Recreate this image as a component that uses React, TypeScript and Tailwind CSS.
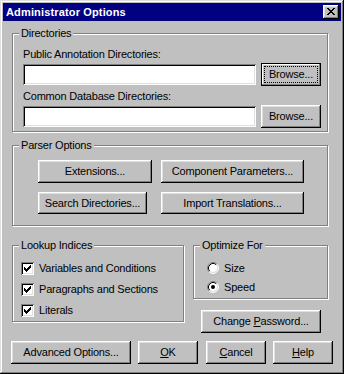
import React from 'react';

const raised =
  'shadow-[inset_-1px_-1px_#000,inset_1px_1px_#fff,inset_-2px_-2px_#808080,inset_2px_2px_#dfdfdf]';
const sunken =
  'shadow-[inset_1px_1px_#808080,inset_-1px_-1px_#fff,inset_2px_2px_#000,inset_-2px_-2px_#dfdfdf]';

function Btn({ children, className = '' }: { children: React.ReactNode; className?: string }) {
  return (
    <button
      className={`flex items-center justify-center whitespace-nowrap bg-[#c0c0c0] leading-[13px] ${raised} ${className}`}
    >
      {children}
    </button>
  );
}

function Group({
  label,
  className = '',
  children,
}: {
  label: string;
  className?: string;
  children: React.ReactNode;
}) {
  return (
    <div
      className={`relative border border-[#808080] shadow-[inset_1px_1px_#fff,1px_1px_#fff] ${className}`}
    >
      <span className="absolute left-[6px] top-[-7px] bg-[#c0c0c0] px-[2px] leading-[13px] whitespace-nowrap">
        {label}
      </span>
      {children}
    </div>
  );
}

function Field() {
  return <input type="text" readOnly className={`w-[233px] h-[21px] bg-white outline-none ${sunken}`} />;
}

function CheckRow({ label }: { label: string }) {
  // 13x13 win95 checkbox, check mark drawn pixel column by column
  const cols = [
    [3, 5],
    [4, 6],
    [5, 7],
    [6, 6],
    [7, 5],
    [8, 4],
    [9, 3],
  ];
  return (
    <div className="flex h-[13px] items-center">
      <span className={`block w-[13px] h-[13px] shrink-0 bg-white ${sunken}`}>
        <svg width="13" height="13" viewBox="0 0 13 13" shapeRendering="crispEdges">
          <path d={cols.map(([x, y]) => `M${x} ${y}h1v3h-1z`).join(' ')} fill="#000" />
        </svg>
      </span>
      <span className="ml-[5px] leading-[13px] whitespace-nowrap">{label}</span>
    </div>
  );
}

function RadioRow({ label, on }: { label: string; on?: boolean }) {
  return (
    <div className="flex h-[12px] items-center">
      <svg width="12" height="12" viewBox="0 0 12 12" className="shrink-0">
        <circle cx="6" cy="6" r="5" fill="#fff" />
        <path d="M2.11 9.89A5.5 5.5 0 0 1 9.89 2.11" stroke="#808080" fill="none" />
        <path d="M9.89 2.11A5.5 5.5 0 0 1 2.11 9.89" stroke="#fff" fill="none" />
        <path d="M2.82 9.18A4.5 4.5 0 0 1 9.18 2.82" stroke="#000" fill="none" />
        <path d="M9.18 2.82A4.5 4.5 0 0 1 2.82 9.18" stroke="#dfdfdf" fill="none" />
        {on && <circle cx="6" cy="6" r="2" fill="#000" />}
      </svg>
      <span className="ml-[5px] leading-[13px]">{label}</span>
    </div>
  );
}

export default function App() {
  return (
    <div
      className="w-[344px] h-[374px] bg-[#c0c0c0] p-[3px] flex flex-col text-black text-[11px] tracking-[-0.2px] shadow-[inset_-1px_-1px_#000,inset_1px_1px_#dfdfdf,inset_-2px_-2px_#808080,inset_2px_2px_#fff]"
      style={{ fontFamily: '"Liberation Sans", Arial, sans-serif' }}
    >
      {/* title bar */}
      <div className="h-[18px] bg-[#000080] flex items-center justify-between pl-[3px] pr-[2px]">
        <span className="text-white font-bold leading-[13px] tracking-[0.15px]">Administrator Options</span>
        <button className={`w-[16px] h-[14px] bg-[#c0c0c0] flex items-start justify-start pl-[4px] pt-[3px] ${raised}`}>
          <svg width="8" height="7" viewBox="0 0 8 7" shapeRendering="crispEdges">
            <path
              d="M0 0h2v1H0zM6 0h2v1H6zM1 1h2v1H1zM5 1h2v1H5zM2 2h4v1H2zM3 3h2v1H3zM2 4h4v1H2zM1 5h2v1H1zM5 5h2v1H5zM0 6h2v1H0zM6 6h2v1H6z"
              fill="#000"
            />
          </svg>
        </button>
      </div>

      <div className="flex flex-col pl-[9px]">
        <Group label="Directories" className="mt-[12px] w-[316px] pt-[14px] pl-[10px] pb-[3px]">
          <div className="leading-[13px]">Public Annotation Directories:</div>
          <div className="mt-[2px] flex items-center">
            <Field />
            <button
              className="ml-[5px] w-[60px] h-[23px] flex items-center justify-center bg-[#c0c0c0] border border-black shadow-[inset_-1px_-1px_#808080,inset_1px_1px_#fff]"
            >
              <span className="border border-dotted border-black px-[4px] py-[1px] leading-[13px]">Browse...</span>
            </button>
          </div>
          <div className="mt-[4px] leading-[13px]">Common Database Directories:</div>
          <div className="mt-[2px] flex items-center">
            <Field />
            <Btn className="ml-[5px] w-[60px] h-[23px]">Browse...</Btn>
          </div>
        </Group>

        <Group label="Parser Options" className="mt-[13px] w-[316px] pt-[14px] pl-[25px] pb-[11px]">
          <div className="flex gap-[9px]">
            <Btn className="w-[114px] h-[23px]">Extensions...</Btn>
            <Btn className="w-[143px] h-[23px]">Component Parameters...</Btn>
          </div>
          <div className="mt-[9px] flex gap-[14px]">
            <Btn className="w-[109px] h-[22px]">Search Directories...</Btn>
            <Btn className="w-[143px] h-[22px]">Import Translations...</Btn>
          </div>
        </Group>

        <div className="mt-[19px] flex items-start gap-[9px]">
          <Group label="Lookup Indices" className="w-[172px] pt-[16px] pl-[8px] pb-[4px] flex flex-col gap-[8px]">
            <CheckRow label="Variables and Conditions" />
            <CheckRow label="Paragraphs and Sections" />
            <CheckRow label="Literals" />
          </Group>
          <div className="flex flex-col w-[135px]">
            <Group label="Optimize For" className="w-[135px] pt-[16px] pl-[13px] pb-[5px] flex flex-col gap-[7px]">
              <RadioRow label="Size" />
              <RadioRow label="Speed" on />
            </Group>
            <Btn className="mt-[11px] ml-[8px] w-[120px] h-[23px]">
              Change&nbsp;<span className="underline">P</span>assword...
            </Btn>
          </div>
        </div>

        <div className="mt-[8px] ml-[-1px] flex">
          <Btn className="w-[120px] h-[23px]">Advanced Options...</Btn>
          <Btn className="ml-[7px] w-[60px] h-[23px]">
            <span className="underline">O</span>K
          </Btn>
          <Btn className="ml-[8px] w-[60px] h-[23px]">
            <span className="underline">C</span>ancel
          </Btn>
          <Btn className="ml-[7px] w-[60px] h-[23px]">
            <span className="underline">H</span>elp
          </Btn>
        </div>
      </div>
    </div>
  );
}
